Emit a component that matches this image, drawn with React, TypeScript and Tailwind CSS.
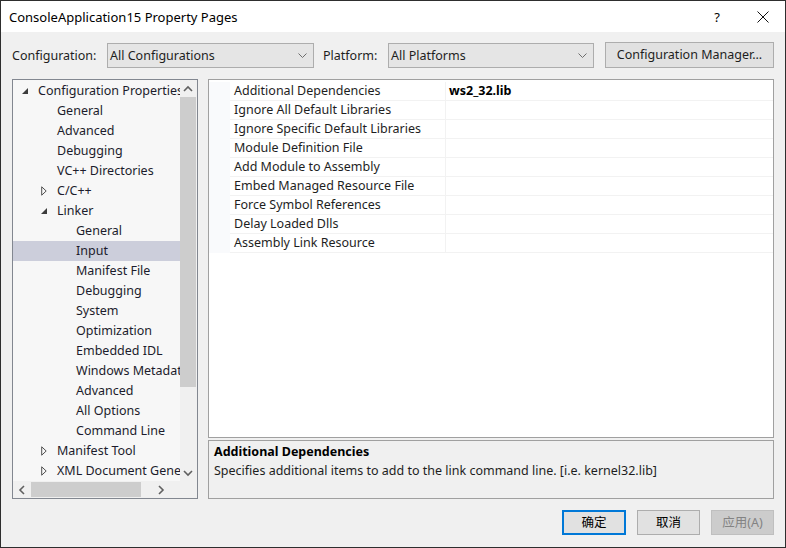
import React from 'react';

type TreeItem = {
  label: string;
  level: 0 | 1 | 2;
  toggle?: 'open' | 'closed';
  selected?: boolean;
};

const treeItems: TreeItem[] = [
  { label: 'Configuration Properties', level: 0, toggle: 'open' },
  { label: 'General', level: 1 },
  { label: 'Advanced', level: 1 },
  { label: 'Debugging', level: 1 },
  { label: 'VC++ Directories', level: 1 },
  { label: 'C/C++', level: 1, toggle: 'closed' },
  { label: 'Linker', level: 1, toggle: 'open' },
  { label: 'General', level: 2 },
  { label: 'Input', level: 2, selected: true },
  { label: 'Manifest File', level: 2 },
  { label: 'Debugging', level: 2 },
  { label: 'System', level: 2 },
  { label: 'Optimization', level: 2 },
  { label: 'Embedded IDL', level: 2 },
  { label: 'Windows Metadata', level: 2 },
  { label: 'Advanced', level: 2 },
  { label: 'All Options', level: 2 },
  { label: 'Command Line', level: 2 },
  { label: 'Manifest Tool', level: 1, toggle: 'closed' },
  { label: 'XML Document Generator', level: 1, toggle: 'closed' },
];

const properties: { name: string; value?: string }[] = [
  { name: 'Additional Dependencies', value: 'ws2_32.lib' },
  { name: 'Ignore All Default Libraries' },
  { name: 'Ignore Specific Default Libraries' },
  { name: 'Module Definition File' },
  { name: 'Add Module to Assembly' },
  { name: 'Embed Managed Resource File' },
  { name: 'Force Symbol References' },
  { name: 'Delay Loaded Dlls' },
  { name: 'Assembly Link Resource' },
];

const levelPad = ['pl-[6px]', 'pl-[25px]', 'pl-[44px]'];

function Chevron({ dir, className }: { dir: 'up' | 'down' | 'left' | 'right'; className?: string }) {
  const pts = {
    up: '1,6 5,2 9,6',
    down: '1,2 5,6 9,2',
    left: '6,1 2,5 6,9',
    right: '2,1 6,5 2,9',
  }[dir];
  const vb = dir === 'up' || dir === 'down' ? '0 0 10 8' : '0 0 8 10';
  const size = dir === 'up' || dir === 'down' ? 'w-[10px] h-[8px]' : 'w-[8px] h-[10px]';
  return (
    <svg viewBox={vb} className={`${size} ${className ?? ''}`}>
      <polyline points={pts} fill="none" stroke="#606060" strokeWidth="1.6" />
    </svg>
  );
}

function Toggle({ state }: { state: 'open' | 'closed' }) {
  if (state === 'open') {
    return (
      <svg viewBox="0 0 6 6" className="w-[6px] h-[6px]">
        <polygon points="6,0 6,6 0,6" fill="#3c3c3c" />
      </svg>
    );
  }
  return (
    <svg viewBox="0 0 6 10" className="w-[6px] h-[10px]">
      <polygon points="0.7,0.8 5.2,5 0.7,9.2" fill="none" stroke="#505050" strokeWidth="1" />
    </svg>
  );
}

function Combo({ text, width }: { text: string; width: string }) {
  return (
    <div
      className={`${width} h-[25px] flex items-center justify-between border border-[#adadad] bg-[#e5e5e5] pl-[2px] pr-[6px] text-[#1e1e1e]`}
    >
      <span className="pt-[2px]">{text}</span>
      <svg viewBox="0 0 9 5" className="w-[9px] h-[5px]">
        <polyline points="0.5,0.5 4.5,4.5 8.5,0.5" fill="none" stroke="#6d6d6d" strokeWidth="1" />
      </svg>
    </div>
  );
}

export default function App() {
  return (
    <div className="w-[786px] h-[548px] border border-[#2e2e2e] flex flex-col font-['Noto_Sans','Noto_Sans_CJK_SC',sans-serif] text-[12.5px] leading-[18px] text-[#1e1e1e] overflow-hidden">
      {/* title bar */}
      <div className="h-[31px] bg-white flex items-center pl-[8px]">
        <span className="text-[13px] text-black">ConsoleApplication15 Property Pages</span>
        <span className="ml-auto mr-[37px] text-[13px] text-black">?</span>
        <svg viewBox="0 0 12 12" className="w-[12px] h-[12px] mr-[16px]">
          <path d="M0.5 0.5 L11.5 11.5 M11.5 0.5 L0.5 11.5" stroke="#111" strokeWidth="1" />
        </svg>
      </div>

      <div className="flex-1 bg-[#f0f0f0] px-[11px] flex flex-col">
        {/* configuration row */}
        <div className="mt-[10px] h-[26px] flex items-center">
          <span className="w-[95px] pt-[2px]">Configuration:</span>
          <Combo text="All Configurations" width="w-[207px]" />
          <span className="ml-[9px] w-[65px] pt-[2px]">Platform:</span>
          <Combo text="All Platforms" width="w-[206px]" />
          <button className="ml-[11px] w-[169px] h-[26px] border border-[#adadad] bg-[#e1e1e1] text-[#1e1e1e]">
            Configuration Manager...
          </button>
        </div>

        {/* main area */}
        <div className="mt-[11px] h-[420px] flex gap-[10px]">
          {/* tree */}
          <div className="w-[186px] h-full border border-[#828790] bg-[#f7f7f7] flex flex-col">
            <div className="flex flex-1 min-h-0">
              <div className="w-[167px] overflow-hidden pt-[1px]">
                {treeItems.map((item, i) => (
                  <div
                    key={i}
                    className={`h-[20px] flex items-center whitespace-nowrap ${levelPad[item.level]} ${
                      item.selected ? 'bg-[#cccedb]' : ''
                    }`}
                  >
                    <span className="w-[19px] shrink-0 pl-[3px] flex items-center">
                      {item.toggle && <Toggle state={item.toggle} />}
                    </span>
                    <span className="text-[#1c1c2c]">{item.label}</span>
                  </div>
                ))}
              </div>
              <div className="w-[17px] bg-[#f0f0f0] flex flex-col">
                <div className="h-[17px] flex items-center justify-center pr-[1px]">
                  <Chevron dir="up" />
                </div>
                <div className="ml-0 mr-[1px] h-[290px] bg-[#cdcdcd]" />
                <div className="flex-1" />
                <div className="h-[17px] flex items-center justify-center pr-[1px]">
                  <Chevron dir="down" />
                </div>
              </div>
            </div>
            <div className="h-[17px] flex bg-[#f0f0f0]">
              <div className="w-[167px] flex items-center">
                <div className="w-[18px] flex justify-center">
                  <Chevron dir="left" />
                </div>
                <div className="w-[110px] h-[15px] bg-[#cdcdcd]" />
                <div className="flex-1 flex justify-center">
                  <Chevron dir="right" />
                </div>
              </div>
              <div className="w-[17px]" />
            </div>
          </div>

          {/* right column */}
          <div className="w-[566px] h-full flex flex-col gap-[2px]">
            <div className="h-[359px] border border-[#a0a0a0] bg-white pt-[2px]">
              {properties.map((p, i) => (
                <div key={i} className="h-[19px] flex">
                  <div className="w-[21px] bg-[#f9fafc]" />
                  <div className="w-[215px] pl-[4px] flex items-center border-b border-[#f2f2f2] whitespace-nowrap">
                    {p.name}
                  </div>
                  <div className="flex-1 pl-[3px] flex items-center border-b border-l border-[#f2f2f2] font-bold text-black">
                    {p.value}
                  </div>
                </div>
              ))}
            </div>
            <div className="flex-1 border border-[#a0a0a0] bg-[#f0f0f0] pl-[5px] pt-[2px]">
              <div className="font-bold text-black">Additional Dependencies</div>
              <div className="mt-[1px]">Specifies additional items to add to the link command line. [i.e. kernel32.lib]</div>
            </div>
          </div>
        </div>

        {/* buttons */}
        <div className="mt-[11px] flex justify-end">
          <button className="w-[64px] h-[25px] border-2 border-[#0078d7] bg-[#e1e1e1] text-black">确定</button>
          <button className="ml-[11px] w-[63px] h-[25px] border border-[#adadad] bg-[#e1e1e1] text-black">取消</button>
          <button className="ml-[11px] w-[63px] h-[25px] border border-[#bfbfbf] bg-[#cccccc] text-[#838383]">
            应用(A)
          </button>
        </div>
      </div>
    </div>
  );
}
